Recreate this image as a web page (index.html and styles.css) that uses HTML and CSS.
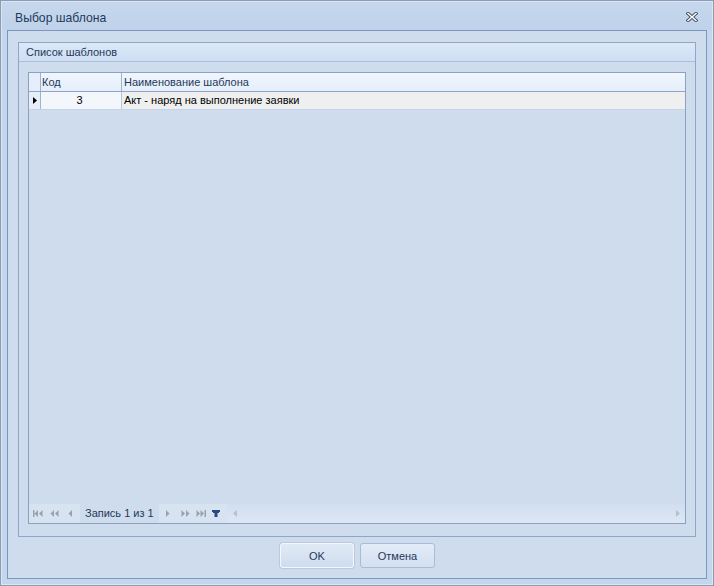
FILE: index.html
```html
<!DOCTYPE html>
<html lang="ru">
<head>
  <meta charset="UTF-8">
  <link rel="stylesheet" href="styles.css">
  <title>Выбор шаблона</title>
</head>
<body>
  <!-- Template picker dialog -->
  <div class="window">
    <div class="titlebar">
      <span class="title">Выбор шаблона</span>
      <span class="close">
        <svg width="12" height="10" viewBox="0 0 12 10">
          <path d="M2 1.5 L10 8.5 M10 1.5 L2 8.5" stroke="#4a5566" stroke-width="3.4" stroke-linecap="square"/>
          <path d="M2 1.5 L10 8.5 M10 1.5 L2 8.5" stroke="#ffffff" stroke-width="1.4" stroke-linecap="square"/>
        </svg>
      </span>
    </div>

    <div class="client">
      <div class="group">
        <div class="group-head">Список шаблонов</div>
        <div class="group-body">
          <div class="grid">
            <div class="grid-head">
              <div class="ind"></div>
              <div class="col-code">Код</div>
              <div class="col-name">Наименование шаблона</div>
            </div>
            <div class="grid-row">
              <div class="ind">
                <svg width="4" height="7" viewBox="0 0 4 7"><path d="M0 0 L4 3.5 L0 7 Z" fill="#000"/></svg>
              </div>
              <div class="col-code cell-focus">3</div>
              <div class="col-name">Акт - наряд на выполнение заявки</div>
            </div>
            <div class="grid-empty"></div>

            <!-- record navigator + horizontal scroll -->
            <div class="pager">
              <div class="nav">
                <svg class="i-first" width="10" height="7" viewBox="0 0 10 7"><path d="M0 0h1.5v7H0z M5 0v7L1.5 3.5z M9.5 0v7L6 3.5z" fill="#99a1ad"/></svg>
                <svg class="i-pprev" width="9" height="7" viewBox="0 0 9 7"><path d="M4 0v7L0.5 3.5z M8.5 0v7L5 3.5z" fill="#99a1ad"/></svg>
                <svg class="i-prev" width="4" height="7" viewBox="0 0 4 7"><path d="M4 0v7L0.5 3.5z" fill="#99a1ad"/></svg>
              </div>
              <div class="pager-text">Запись 1 из 1</div>
              <div class="nav nav-right">
                <svg class="i-next" width="4" height="7" viewBox="0 0 4 7"><path d="M0 0v7L3.5 3.5z" fill="#99a1ad"/></svg>
                <svg class="i-pnext" width="9" height="7" viewBox="0 0 9 7"><path d="M0.5 0v7L4 3.5z M5 0v7L8.5 3.5z" fill="#99a1ad"/></svg>
                <svg class="i-last" width="10" height="7" viewBox="0 0 10 7"><path d="M0.5 0v7L4 3.5z M4.5 0v7L8 3.5z M8.5 0h1.5v7H8.5z" fill="#99a1ad"/></svg>
                <svg class="i-filter" width="8" height="7" viewBox="0 0 8 7"><path d="M0 0h8v2H0z M1 2h6v1H1z M2.5 3h3v4h-3z" fill="#2b4a80"/></svg>
              </div>
              <div class="hscroll">
                <svg width="4" height="7" viewBox="0 0 4 7"><path d="M4 0v7L0 3.5z" fill="#b4c0d0"/></svg>
                <svg width="4" height="7" viewBox="0 0 4 7"><path d="M0 0v7L4 3.5z" fill="#b4c0d0"/></svg>
              </div>
            </div>
          </div>
        </div>
      </div>

      <div class="buttons">
        <button class="btn btn-default">OK</button>
        <button class="btn">Отмена</button>
      </div>
    </div>
  </div>
</body>
</html>
```

FILE: styles.css
```css
* {
  box-sizing: border-box;
}
body {
  margin: 0;
  font-family: "Liberation Sans", Arial, sans-serif;
  font-size: 11px;
  background: #c4d6ec;
}
svg {
  flex: none;
  display: block;
}
.window {
  width: 714px;
  height: 586px;
  display: flex;
  flex-direction: column;
  border: 1px solid #8b9bb2;
  box-shadow: inset 0 0 0 1px #dbe6f4;
  background: #c4d6ec;
  padding: 0 6px 6px;
}
.titlebar {
  height: 28px;
  display: flex;
  align-items: center;
  justify-content: space-between;
  padding: 3px 14px 0 13px;
  background: linear-gradient(#c6d7ed, #bfd2ea);
  margin: 1px -5px 0;
}
.title {
  color: #1e395b;
  font-size: 12.2px;
}
.close {
  display: flex;
  margin-top: -2px;
}
.client {
  flex: 1;
  display: flex;
  flex-direction: column;
  border: 1px solid #7b96bf;
  background: #cfdcee;
  padding: 10px 10px 10px;
}
.group {
  flex: 1;
  display: flex;
  flex-direction: column;
  border: 1px solid #8ea6c8;
  margin-top: 1px;
}
.group-head {
  height: 19px;
  line-height: 18px;
  padding-left: 7px;
  color: #1e395b;
  background: linear-gradient(#dce8f8, #cfdef3);
  border-bottom: 1px solid #aabfdc;
}
.group-body {
  flex: 1;
  display: flex;
  padding: 10px 9px 12px;
}
.grid {
  flex: 1;
  display: flex;
  flex-direction: column;
  border: 1px solid #8ba1c1;
  background: #cfdcee;
}
.grid-head,
.grid-row {
  display: flex;
}
.grid-head {
  height: 19px;
  line-height: 18px;
  color: #1e395b;
  background: linear-gradient(#f1f6fd, #e5eefa);
  border-bottom: 1px solid #8ea5c7;
}
.grid-row {
  height: 18px;
  line-height: 17px;
  color: #000;
  background: #efefef;
  border-bottom: 1px solid #c3d3ea;
}
.ind {
  width: 12px;
  flex: none;
  border-right: 1px solid #9fb3d1;
  display: flex;
  align-items: center;
  padding-left: 4px;
}
.grid-head .ind {
  background: #e5eefa;
}
.grid-row .ind {
  background: #e8eef7;
}
.col-code {
  width: 81px;
  flex: none;
  padding-left: 1px;
  border-right: 1px solid #b6c6de;
}
.grid-head .col-code {
  border-right-color: #9fb3d1;
}
.col-name {
  flex: 1;
  padding-left: 2px;
}
.cell-focus {
  background: #f3f6fb;
  text-align: center;
  padding-left: 0;
  padding-right: 3px;
}
.grid-empty {
  flex: 1;
}
.pager {
  height: 19px;
  display: flex;
  align-items: stretch;
  color: #1e395b;
  white-space: nowrap;
}
.nav {
  display: flex;
  align-items: center;
  width: 51px;
  flex: none;
  padding-left: 4px;
  background: #d8e3f2;
}
.i-pprev { margin-left: 7px; }
.i-prev { margin-left: 9px; }
.nav-right {
  width: 68px;
  padding-left: 7px;
}
.i-pnext { margin-left: 11px; }
.i-last { margin-left: 6px; }
.i-filter { margin-left: 6px; }
.pager-text {
  width: 79px;
  flex: none;
  padding-left: 5px;
  line-height: 19px;
  background: #cfdcee;
}
.hscroll {
  flex: 1;
  display: flex;
  align-items: center;
  justify-content: space-between;
  padding: 0 5px 0 6px;
  background: linear-gradient(#d2deef, #dde7f4);
}
.buttons {
  display: flex;
  justify-content: center;
  gap: 6px;
  margin-top: 6px;
  padding-left: 1px;
}
.btn {
  width: 74px;
  height: 25px;
  font-family: "Liberation Sans", Arial, sans-serif;
  font-size: 11px;
  color: #1e395b;
  border: 1px solid #aabbd3;
  border-radius: 3px;
  background: linear-gradient(#e3ecf8, #d3dff0);
  padding: 0;
}
.btn-default {
  border-color: #f4f8fd;
  box-shadow: 0 0 0 1px #b9c9de;
  background: linear-gradient(#e0eaf6, #cfdcee);
}
.btn + .btn {
  width: 75px;
}
```
